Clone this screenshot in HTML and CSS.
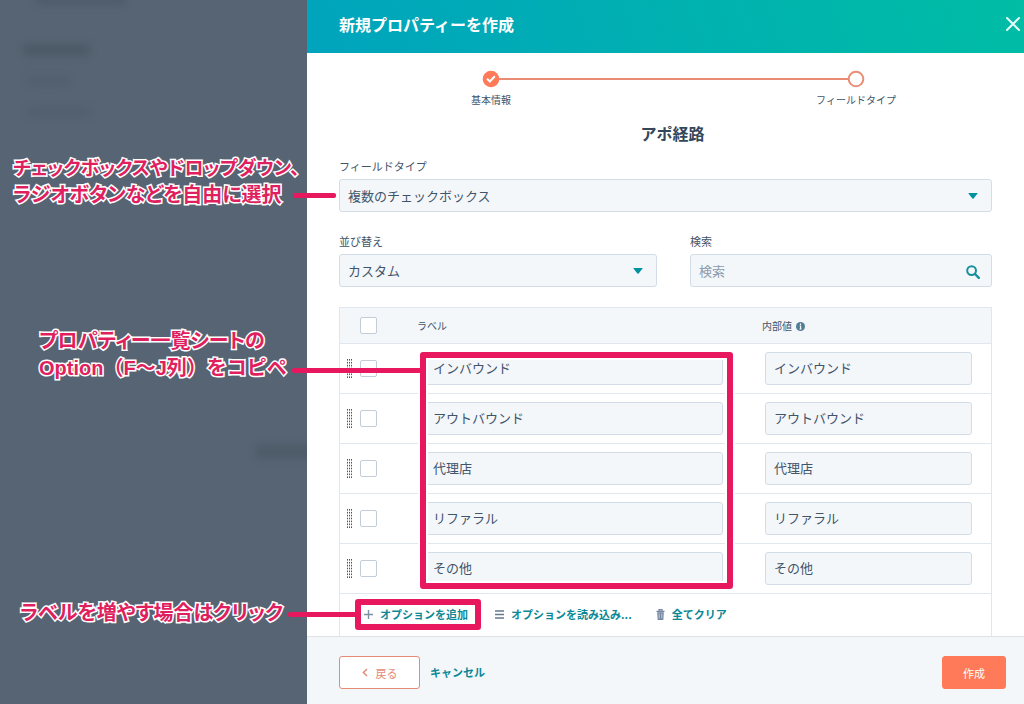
FILE: index.html
```
<!DOCTYPE html>
<html lang="ja">
<head>
<meta charset="utf-8">
<meta name="viewport" content="width=device-width, initial-scale=1">
<title>新規プロパティーを作成</title>
<link rel="stylesheet" href="styles.css">
</head>
<body>
<svg class="defs" aria-hidden="true">
  <symbol id="caret" viewBox="0 0 10 6"><path d="M1 0h8q1 0 .4.8L5.6 5.4q-.6.7-1.2 0L.6.8Q0 0 1 0z" fill="#0091a0"/></symbol>
  <symbol id="grip" viewBox="0 0 5 19"><path d="M.5 0v19M2.5 0v19M4.5 0v19" stroke="#46566a" stroke-width="1" stroke-dasharray="1.6 1.3" fill="none"/></symbol>
</svg>
<div class="layout">
  <aside class="backdrop">
    <div class="smudges">
      <span class="smudge smudge-top"></span>
      <span class="smudge smudge-heading"></span>
      <span class="smudge smudge-item"></span>
      <span class="smudge smudge-item-wide"></span>
      <span class="smudge smudge-button"></span>
    </div>
    <p class="note note-type"><span class="long-line">チェックボックスやドロップダウン、</span><br>ラジオボタンなどを自由に選択</p>
    <p class="note note-sheet">プロパティー一覧シートの<br><span class="full-width">Option（F～J列）をコピペ</span></p>
    <p class="note note-add">ラベルを増やす場合はクリック</p>
  </aside>

  <main class="panel">
    <header class="panel-header">
      <h1>新規プロパティーを作成</h1>
      <button class="close" type="button" aria-label="閉じる">
        <svg width="14" height="14" viewBox="0 0 14 14"><path d="M1 1l12 12M13 1L1 13" stroke="#e4fbf8" stroke-width="2" stroke-linecap="round"/></svg>
      </button>
    </header>

    <form class="panel-body">
      <ol class="steps">
        <li><svg width="18" height="18" viewBox="0 0 18 18"><circle cx="9" cy="9" r="8.3" fill="#ff7a59"/><path d="M5.6 9.3l2.3 2.2 4.4-4.8" stroke="#fff" stroke-width="2" fill="none" stroke-linecap="round"/></svg><span>基本情報</span></li>
        <li><svg width="18" height="18" viewBox="0 0 18 18"><circle cx="9" cy="9" r="7.3" fill="#fff" stroke="#e98d75" stroke-width="2"/></svg><span>フィールドタイプ</span></li>
      </ol>
      <h2>アポ経路</h2>

      <div class="field">
        <label for="type">フィールドタイプ</label>
        <div class="control">
          <select id="type"><option>複数のチェックボックス</option></select>
          <svg class="caret" width="10" height="6"><use href="#caret"/></svg>
          <i class="pointer pointer-type"></i>
        </div>
      </div>

      <div class="filters">
        <div class="field">
          <label for="sort">並び替え</label>
          <div class="control">
            <select id="sort"><option>カスタム</option></select>
            <svg class="caret" width="10" height="6"><use href="#caret"/></svg>
          </div>
        </div>
        <div class="field">
          <label for="search">検索</label>
          <div class="control">
            <input id="search" type="text" placeholder="検索">
            <svg class="lens" width="14" height="14" viewBox="0 0 14 14"><circle cx="5.6" cy="5.6" r="4.4" fill="none" stroke="#16919c" stroke-width="2"/><path d="M9 9l3.8 3.8" stroke="#16919c" stroke-width="2.4" stroke-linecap="round"/></svg>
          </div>
        </div>
      </div>

      <div class="options">
        <table>
          <colgroup><col class="col-grip"><col class="col-check"><col class="col-label"><col class="col-value"></colgroup>
          <thead>
            <tr><th></th><th><input type="checkbox" aria-label="すべて選択"></th><th>ラベル</th><th>内部値 <svg class="info" width="9" height="9" viewBox="0 0 9 9"><circle cx="4.5" cy="4.5" r="4.5" fill="#527f96"/><path d="M4.5 1.6v1.3M3.7 4h.9v3M3.5 7h2" stroke="#fff" stroke-width="1.1" fill="none"/></svg></th></tr>
          </thead>
          <tbody>
            <tr><td><svg width="5" height="19"><use href="#grip"/></svg></td><td><input type="checkbox" aria-label="インバウンドを選択"></td><td><input type="text" aria-label="ラベル" value="インバウンド"></td><td><input type="text" aria-label="内部値" value="インバウンド"></td></tr>
            <tr><td><svg width="5" height="19"><use href="#grip"/></svg></td><td><input type="checkbox" aria-label="アウトバウンドを選択"></td><td><input type="text" aria-label="ラベル" value="アウトバウンド"></td><td><input type="text" aria-label="内部値" value="アウトバウンド"></td></tr>
            <tr><td><svg width="5" height="19"><use href="#grip"/></svg></td><td><input type="checkbox" aria-label="代理店を選択"></td><td><input type="text" aria-label="ラベル" value="代理店"></td><td><input type="text" aria-label="内部値" value="代理店"></td></tr>
            <tr><td><svg width="5" height="19"><use href="#grip"/></svg></td><td><input type="checkbox" aria-label="リファラルを選択"></td><td><input type="text" aria-label="ラベル" value="リファラル"></td><td><input type="text" aria-label="内部値" value="リファラル"></td></tr>
            <tr><td><svg width="5" height="19"><use href="#grip"/></svg></td><td><input type="checkbox" aria-label="その他を選択"></td><td><input type="text" aria-label="ラベル" value="その他"></td><td><input type="text" aria-label="内部値" value="その他"></td></tr>
          </tbody>
        </table>
        <div class="actions">
          <button type="button" class="link add"><svg width="9" height="9" viewBox="0 0 9 9"><path d="M4.5 0v9M0 4.5h9" stroke="#7c8fa3" stroke-width="1.4"/></svg>オプションを追加<i class="frame frame-add"></i><i class="pointer pointer-add"></i></button>
          <button type="button" class="link"><svg width="9" height="9" viewBox="0 0 9 9"><path d="M0 1h9M0 4.5h9M0 8h9" stroke="#66798d" stroke-width="1.4"/></svg>オプションを読み込み...</button>
          <button type="button" class="link"><svg width="9" height="11" viewBox="0 0 9 11"><path d="M.5 2.3h8M3 2V.7h3V2" stroke="#7385a0" stroke-width="1.2" fill="none"/><path d="M1.2 3.3h6.6L7.3 11H1.7z" fill="#7385a0"/><path d="M3.2 4.5v5M5.8 4.5v5" stroke="#dbe2ea" stroke-width=".8"/></svg>全てクリア</button>
        </div>
        <i class="frame frame-labels"></i>
        <i class="pointer pointer-labels"></i>
      </div>
    </form>

    <footer class="panel-footer">
      <button type="button" class="back"><svg width="6" height="9" viewBox="0 0 6 9"><path d="M5 1L1.4 4.5 5 8" stroke="#e58a75" stroke-width="1.5" fill="none"/></svg>戻る</button>
      <button type="button" class="link">キャンセル</button>
      <button type="submit" class="create">作成</button>
    </footer>
  </main>
</div>
</body>
</html>
```
FILE: styles.css
```
* { box-sizing: border-box; }
body {
  margin: 0;
  color: #42546a;
  font-family: "Noto Sans CJK JP", sans-serif;
  font-size: 13px;
}
h1, h2, p, ol { margin: 0; padding: 0; }
button, input, select { font: inherit; color: inherit; margin: 0; }
button { cursor: pointer; }
svg { display: block; flex: none; }
.defs { position: absolute; width: 0; height: 0; }

.layout { display: flex; min-height: 100vh; }
.backdrop { position: relative; z-index: 1; flex: 0 0 307px; background: #566473; }
.panel { position: relative; z-index: 2; flex: 1; min-width: 0; display: flex; flex-direction: column; background: #fff; }

/* Blurred page behind the panel */
.smudges { position: absolute; inset: 0; overflow: hidden; }
.smudge { position: absolute; background: #46525f; filter: blur(4px); opacity: .5; }
.smudge-top { left: 36px; top: -6px; width: 90px; height: 10px; }
.smudge-heading { left: 24px; top: 45px; width: 65px; height: 10px; opacity: .7; }
.smudge-item { left: 28px; top: 77px; width: 42px; height: 8px; opacity: .3; }
.smudge-item-wide { left: 28px; top: 108px; width: 62px; height: 8px; opacity: .3; }
.smudge-button { left: 256px; top: 445px; width: 60px; height: 13px; }

/* Call-outs */
.note {
  position: absolute;
  color: #e01f5f;
  font-family: "Liberation Sans", "Noto Sans CJK JP", sans-serif;
  font-size: 20px;
  font-weight: 700;
  line-height: 27px;
  white-space: nowrap;
  font-feature-settings: "palt";
  -webkit-text-stroke: 3px #fff;
  paint-order: stroke fill;
}
.full-width { font-feature-settings: normal; }
.long-line { font-size: 19px; }
.note-type { left: 13px; top: 155px; }
.note-sheet { left: 39px; top: 328px; }
.note-add { left: 20px; top: 600px; }
.pointer { position: absolute; height: 5px; border-radius: 2px; background: #e8185f; }
.frame { position: absolute; border: 6px solid #e8185f; border-radius: 3px; pointer-events: none; }
.pointer-type { left: -46px; top: 14px; width: 43px; }
.pointer-labels { left: -48px; top: 60px; width: 130px; }
.pointer-add { left: -76px; top: 6px; width: 70px; }
.frame-labels { left: 80px; top: 44px; width: 313px; height: 237px; box-shadow: 0 0 0 2px #fff, inset 0 0 0 2px #fff; }
.frame-add { inset: -7px -10px -7px -9px; }

.panel-header {
  display: flex;
  align-items: center;
  justify-content: space-between;
  height: 53px;
  padding: 0 4px 5px 32px;
  background: linear-gradient(70deg, #00a4bd, #00bda5);
}
h1 { color: #fff; font-size: 16px; line-height: 24px; }
.close { padding: 0; border: 0; background: none; }

.panel-body { flex: 1; display: flex; flex-direction: column; padding: 17px 32px 0; }
.steps { display: flex; justify-content: space-between; position: relative; list-style: none; padding: 0 96px 0 112px; }
.steps::before { content: ""; position: absolute; left: 160px; right: 143px; top: 8px; height: 2px; background: #ea8c75; }
.steps li { position: relative; width: 80px; display: flex; flex-direction: column; align-items: center; gap: 4px; font-size: 10px; line-height: 16px; }
h2 { margin-top: 13px; padding-left: 14px; color: #33475b; font-size: 16px; line-height: 24px; text-align: center; }

.field label { display: block; font-size: 11px; line-height: 16px; margin-bottom: 5px; }
h2 + .field { margin-top: 13px; }
.control { position: relative; }
select, input[type="text"] {
  display: block;
  width: 100%;
  height: 33px;
  padding: 0 8px;
  border: 1px solid #d3dde7;
  border-radius: 3px;
  background: #f4f7fa;
  appearance: none;
}
input::placeholder { color: #8a9bad; opacity: 1; }
.caret { position: absolute; right: 14px; top: 14px; }
.lens { position: absolute; right: 12px; top: 11px; }
.filters { display: grid; grid-template-columns: 318fr 302fr; gap: 33px; margin-top: 21px; }

.options { position: relative; flex: 1; display: flex; flex-direction: column; margin-top: 20px; border: 1px solid #e0e7ee; border-bottom: 0; }
table { width: 100%; border-collapse: collapse; table-layout: fixed; }
.col-grip { width: 20px; }
.col-check { width: 56px; }
.col-value { width: 239px; }
th { height: 35px; padding: 0; background: #f4f7fa; font-size: 10px; font-weight: 400; text-align: left; }
td { height: 50px; padding: 0; }
tr { border-bottom: 1px solid #e0e7ee; }
td:first-child { padding-left: 7px; }
td:nth-child(3) { padding: 0 29px 0 8px; }
td:nth-child(4) { padding: 0 19px 0 13px; }
td input[type="text"] { padding-bottom: 1px; }
th:nth-child(3) { padding-left: 1px; }
th:nth-child(4) { padding-left: 10px; }
.info { display: inline-block; vertical-align: -1px; margin-left: 2px; }
input[type="checkbox"] { display: block; appearance: none; width: 17px; height: 17px; border: 1px solid #c3cdd7; border-radius: 2px; background: #fff; }

.actions { display: flex; gap: 24px; padding: 12px 0 13px 24px; }
.link { display: flex; align-items: center; gap: 7px; padding: 0; border: 0; background: none; color: #0b8896; font-size: 11px; font-weight: 700; line-height: 17px; white-space: nowrap; }
.add { position: relative; padding-right: 3px; }

.panel-footer {
  display: flex;
  align-items: center;
  gap: 10px;
  height: 68px;
  padding: 4px 18px 0 32px;
  border-top: 1px solid #dfe3e8;
  background: #f4f7fa;
}
.back, .create { display: flex; align-items: center; justify-content: center; height: 33px; border: 1px solid #e58a75; border-radius: 3px; font-size: 11px; }
.back { width: 81px; gap: 8px; background: #fff; color: #e58a75; }
.create { width: 64px; margin-left: auto; border-color: #ff7a59; background: #ff7a59; color: #fff; }
```
